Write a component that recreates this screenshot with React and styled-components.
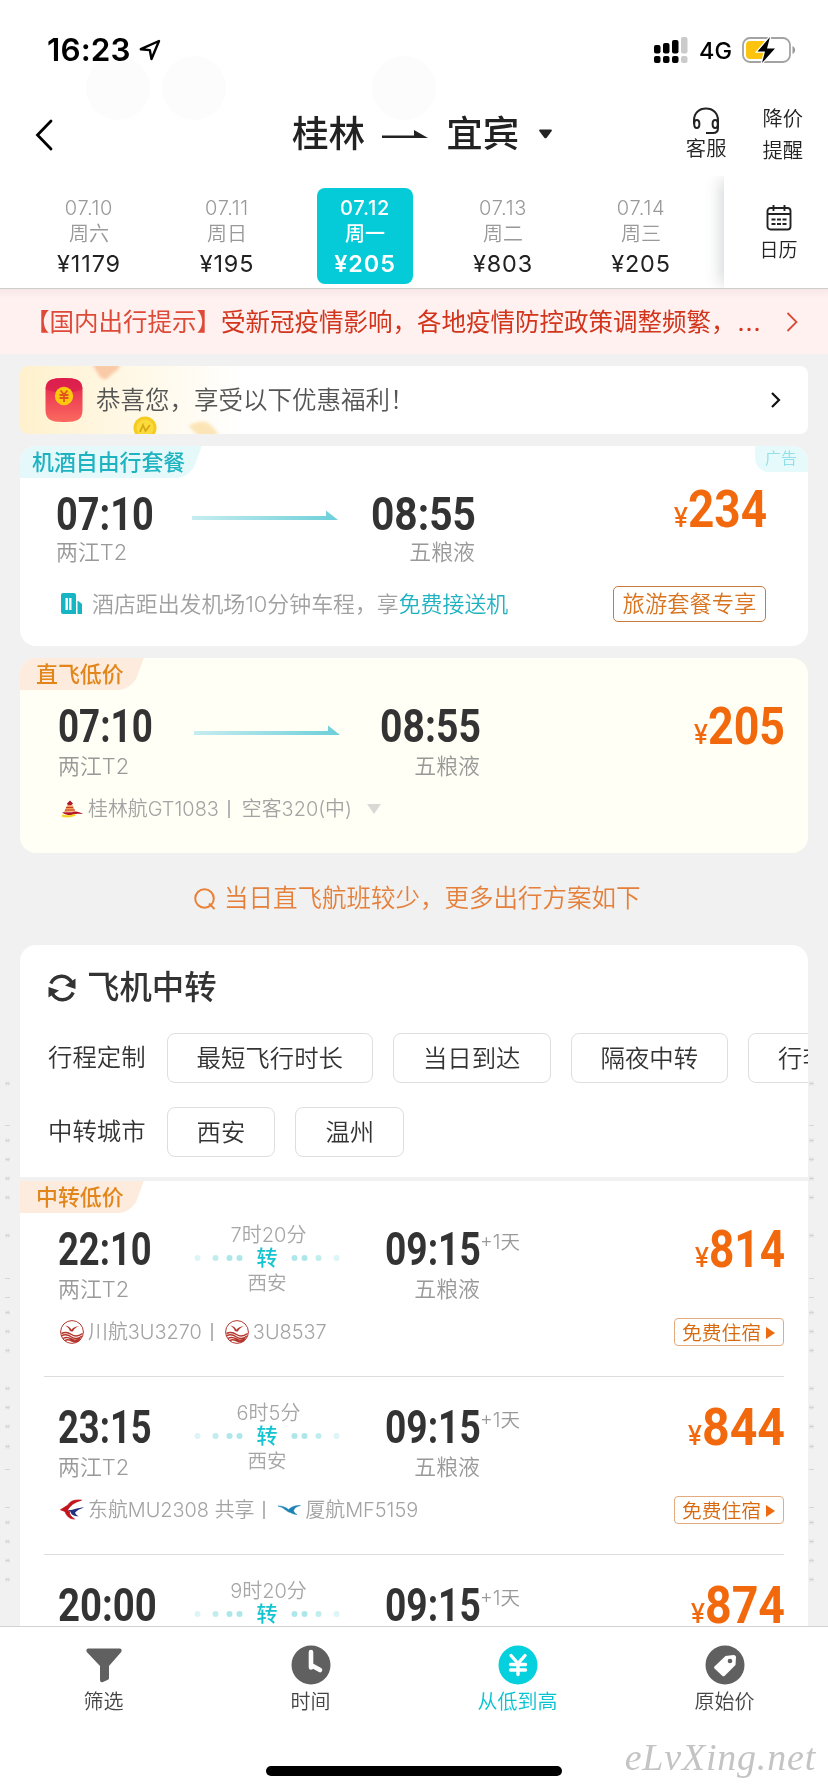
import React from "react";
import styled, { createGlobalStyle } from "styled-components";

const GlobalStyle = createGlobalStyle`
  * {
    box-sizing: border-box;
  }
  body {
    margin: 0;
    background-color: #f1f1f1;
    font-family: Inter, "Noto Sans CJK SC", sans-serif;
    font-weight: 350;
    line-height: 1.2;
    color: #333;
    text-spacing-trim: space-all;
  }
`;
const Page = styled.div`
  position: relative;
  display: flex;
  flex-direction: column;
  width: 828px;
  height: 1792px;
  overflow: hidden;
`;

/* ---------- top ---------- */
const StatusBar = styled.div`
  display: flex;
  align-items: center;
  height: 84px;
  padding: 16px 32px 0 47px;
  background-color: #fff;
  color: #000;
`;
const Clock = styled.span`
  font-size: 31.5px;
  font-weight: 600;
  line-height: 36px;
  letter-spacing: 0.1px;
  margin-right: 8px;
`;
const StatusRight = styled.div`
  display: flex;
  align-items: center;
  margin-left: auto;
`;
const Network = styled.span`
  font-size: 23.5px;
  font-weight: 500;
  line-height: 30px;
  margin: 2px 10px 0 11px;
`;
const Bubbles = styled.svg`
  position: absolute;
  left: 0;
  top: 54px;
  mix-blend-mode: darken;
`;
const NavBar = styled.div`
  display: flex;
  align-items: center;
  height: 92px;
  padding: 11px 25px 2px 35px;
  background-color: #fff;
  color: #222;
`;
const Route = styled.div`
  display: flex;
  align-items: center;
  margin: -2px 0 0 238px;
  font-size: 36.6px;
  font-weight: 500;
  line-height: 48px;
`;
const RouteArrow = styled.svg`
  margin: 0 18px 0 17px;
`;
const NavAction = styled.div`
  display: flex;
  flex-direction: column;
  align-items: center;
  font-size: 20.3px;
  font-weight: 350;
  line-height: ${(props) => props.$line ?? 26}px;
`;
const DateStrip = styled.div`
  display: flex;
  height: 113px;
  padding-left: 20px;
  background-color: #fff;
  border-bottom: 1px solid #cfcccc;
`;
const DateCell = styled.div`
  display: flex;
  flex-direction: column;
  align-items: center;
  width: 96px;
  height: 96px;
  margin: 12px 21px 0;
  padding-top: 7px;
  border-radius: 8px;
  background-color: ${(props) => (props.$active ? "#05cbd9" : "transparent")};
  color: ${(props) => (props.$active ? "#fff" : "#999")};
  font-weight: ${(props) => (props.$active ? 500 : 350)};
  font-size: 20px;
  line-height: 26px;
`;
const DayText = styled.span`
  letter-spacing: 0.7px;
`;
const DatePrice = styled.span`
  font-size: 23.4px;
  font-weight: ${(props) => (props.$active ? 600 : 400)};
  line-height: 34px;
  letter-spacing: 0.9px;
  color: ${(props) => (props.$active ? "#fff" : "#222")};
`;
const CalendarButton = styled.div`
  display: flex;
  flex-direction: column;
  align-items: center;
  gap: 7px;
  width: 104px;
  margin-left: auto;
  padding: 29px 0 0 5px;
  background-color: #fff;
  box-shadow: -8px 0 14px -4px rgba(60, 70, 80, 0.2);
  clip-path: inset(0 0 0 -24px);
  font-size: 19px;
  line-height: 26px;
  color: #222;
`;

/* ---------- notice and coupon ---------- */
const Notice = styled.div`
  display: flex;
  align-items: center;
  height: 65px;
  padding: 0 30px 0 25px;
  background: linear-gradient(#f8e7e7, #fff1f0 9px);
  color: #d2341c;
  font-size: 24.5px;
  font-weight: 400;
  line-height: 34px;
  white-space: nowrap;
`;
const NoticeTitle = styled.span`
  color: #dd4a38;
`;
const Ellipsis = styled.span`
  letter-spacing: 1px;
  margin-left: 2px;
`;
const Chevron = styled.svg`
  margin-left: auto;
`;
const Coupon = styled.div`
  position: relative;
  display: flex;
  align-items: center;
  flex: none;
  height: 68px;
  margin: 12px 20px 0;
  padding: 0 27px 0 25px;
  overflow: hidden;
  border-radius: 8px;
  background: linear-gradient(90deg, #fff1cd, #fff8e6 110px, #fff 225px);
  color: #555;
  font-size: 24.5px;
`;
const Confetti = styled.svg`
  position: absolute;
  left: 60px;
  top: 0;
  .soft {
    filter: blur(1.5px);
  }
`;
const CouponText = styled.span`
  position: relative;
  margin-left: 13px;
  line-height: 34px;
`;

/* ---------- flight cards ---------- */
const Card = styled.div`
  position: relative;
  flex: none;
  height: ${(props) => props.$height}px;
  margin: 12px 20px 0;
  overflow: hidden;
  border-radius: 16px;
  background-color: ${(props) => props.$bg ?? "#fff"};
`;
const Tag = styled.div`
  position: relative;
  z-index: 0;
  display: flex;
  align-items: center;
  width: ${(props) => props.$width}px;
  height: 32px;
  padding-left: ${(props) => props.$pad ?? 16}px;
  font-size: 21.9px;
  font-weight: 500;
  white-space: nowrap;
  color: ${(props) => props.$color};
  &::before {
    content: "";
    position: absolute;
    z-index: -1;
    inset: 0 6px 0 -20px;
    background-color: ${(props) => props.$bg};
    border-radius: 0 0 14px 0;
    transform: skewX(-20deg);
  }
`;
const AdMark = styled.div`
  position: absolute;
  right: 0;
  top: 0;
  width: 53px;
  height: 26px;
  padding-left: 10px;
  border-radius: 0 0 0 14px;
  background-color: #e6fafc;
  color: #93e0e8;
  font-size: 16px;
  line-height: 25px;
`;
const FlightMain = styled.div`
  display: flex;
  height: ${(props) => (props.$promo ? 99 : 96)}px;
  margin-top: 9px;
  padding: ${(props) => (props.$promo ? "0 41px 0 36px" : "0 23px 0 38px")};
`;
const Depart = styled.div`
  width: 136px;
  padding-top: ${(props) => (props.$promo ? 7 : 8)}px;
`;
const Middle = styled.div`
  display: flex;
  flex-direction: column;
  align-items: center;
  width: 146px;
  font-size: 20px;
  line-height: 24px;
  color: #a6a6a6;
`;
const Duration = styled.span`
  height: 25px;
  padding: 1px 0 0 3px;
`;
const Stopover = styled.span`
  padding-top: 2px;
  font-size: 19.6px;
`;
const Arrive = styled.div`
  display: flex;
  flex-direction: column;
  align-items: flex-end;
  width: ${(props) => (props.$promo ? 137 : 140)}px;
  padding-top: ${(props) => (props.$promo ? 7 : 8)}px;
`;
const TimeRow = styled.div`
  position: relative;
  display: flex;
  height: 40px;
  padding-right: ${(props) => (props.$inset ? 1 : 0)}px;
`;
const PlusDay = styled.span`
  position: absolute;
  left: 100%;
  top: 0;
  font-size: 19.5px;
  line-height: 24px;
  white-space: nowrap;
  color: #999;
`;
/* digits squeezed to the given width */
const Digits = styled.span`
  display: block;
  width: ${(props) => props.$width}px;
  font-family: Roboto, sans-serif;
  font-weight: 700;
  font-size: ${(props) => props.$size}px;
  line-height: 40px;
  white-space: nowrap;
  transform: scaleX(${(props) => props.$width / (props.$size * props.$em)});
  transform-origin: left center;
`;
const Airport = styled.div`
  margin-top: ${(props) => (props.$promo ? 4 : 5)}px;
  font-size: 21.9px;
  line-height: 28px;
  color: #999;
`;
const Arrow = styled.svg`
  margin-top: ${(props) => (props.$promo ? 23 : 26)}px;
`;
const Via = styled.div`
  display: flex;
  align-items: center;
  justify-content: space-between;
  width: 146px;
  height: 22px;
`;
const ViaMark = styled.span`
  color: #14c4d0;
  font-size: 21px;
  font-weight: 500;
`;
const Price = styled.div`
  display: flex;
  align-items: baseline;
  height: 40px;
  margin-left: auto;
  margin-top: ${(props) => (props.$promo ? 3 : 8)}px;
  color: #f2690d;
`;
const Yen = styled.span`
  font-size: 27px;
  font-weight: 500;
  line-height: 40px;
  transform: scaleX(0.95);
  transform-origin: right;
`;
const AirlineRow = styled.div`
  display: flex;
  align-items: center;
  height: 28px;
  padding: 0 24px 0 40px;
  font-size: 19.9px;
  line-height: 28px;
  white-space: pre;
  color: #a3a3a3;
`;
const LogoBox = styled.span`
  display: flex;
  align-items: center;
  justify-content: center;
  width: 24px;
  height: 24px;
  margin-right: 4px;
`;
const Bar = styled.span`
  width: 2px;
  height: 18px;
  margin: 0 12px 0 9px;
  background-color: #b5b5b5;
`;
const PromoRow = styled.div`
  display: flex;
  align-items: center;
  height: 36px;
  padding: 0 42px 0 41px;
  font-size: 21.9px;
  color: #a0a0a0;
  em {
    font-style: normal;
    color: #1fb2c1;
  }
`;
const PromoText = styled.span`
  margin-left: 9px;
`;
const PromoBadge = styled.span`
  margin-left: auto;
  width: 153px;
  height: 36px;
  border: 1.5px solid #c87a3c;
  border-radius: 5px;
  text-align: center;
  font-size: 22.3px;
  line-height: 33px;
  color: #d8741f;
`;
const StayBadge = styled.span`
  display: flex;
  align-items: center;
  justify-content: space-between;
  width: 110px;
  height: 28px;
  margin-left: auto;
  padding: 1px 8px 0 7px;
  border: 1px solid #e2ab80;
  border-radius: 4px;
  font-size: 19.8px;
  color: #d8690f;
`;
const Hint = styled.div`
  display: flex;
  align-items: center;
  gap: 8px;
  height: 92px;
  padding-left: 194px;
  font-size: 24.5px;
  color: #e5803a;
`;

/* ---------- transfer section ---------- */
const Transfer = styled.div`
  flex: 1;
  min-height: 0;
  margin: 0 20px;
  overflow: hidden;
  border-radius: 16px 16px 0 0;
  background-color: #fff;
`;
const TransferTitle = styled.div`
  display: flex;
  align-items: center;
  gap: 11px;
  height: 88px;
  padding: 0 0 2px 28px;
  font-size: 32.4px;
  font-weight: 500;
`;
const FilterRow = styled.div`
  display: flex;
  align-items: center;
  gap: 20px;
  height: 50px;
  margin-bottom: ${(props) => (props.$last ? 20 : 24)}px;
  padding-left: 28px;
  font-size: 24.4px;
  white-space: nowrap;
`;
const FilterLabel = styled.span`
  padding-right: 1px;
`;
const Chip = styled.span`
  flex: none;
  height: 50px;
  padding: 0 29px;
  border: 1px solid #dedede;
  border-radius: 8px;
  line-height: 49px;
`;
const Band = styled.div`
  height: 4px;
  background-color: #f1f1f1;
`;
const Item = styled.div`
  padding: ${(props) => (props.$first ? 0 : 14)}px 0 30px;
`;
const Line = styled.div`
  height: 1px;
  margin: 0 24px;
  background-color: #dcdcdc;
`;

/* ---------- bottom ---------- */
const BottomBar = styled.div`
  flex: none;
  display: flex;
  height: 166px;
  border-top: 1px solid #d2d2d2;
  background-color: #fff;
`;
const Tab = styled.div`
  display: flex;
  flex-direction: column;
  align-items: center;
  gap: 3px;
  width: 207px;
  padding-top: 18px;
  font-size: 20px;
  line-height: 28px;
  color: ${(props) => (props.$active ? "#05c3d1" : "#444")};
`;
const HomeIndicator = styled.div`
  position: absolute;
  left: 266px;
  bottom: 16px;
  width: 296px;
  height: 10px;
  border-radius: 5px;
  background-color: #000;
`;
const Watermark = styled.div`
  position: absolute;
  right: 12px;
  bottom: 12px;
  font-family: "Liberation Serif", serif;
  font-style: italic;
  font-size: 38px;
  line-height: 46px;
  letter-spacing: 0.8px;
  color: #c4c4c4;
`;
const SideMarks = styled.svg`
  position: absolute;
  left: ${(props) => props.$left}px;
  top: 1070px;
`;

const dates = [
  { day: "07.10", week: "周六", price: "¥1179" },
  { day: "07.11", week: "周日", price: "¥195" },
  { day: "07.12", week: "周一", price: "¥205", active: true },
  { day: "07.13", week: "周二", price: "¥803" },
  { day: "07.14", week: "周三", price: "¥205" }
];
const transfers = [
  {
    tag: "中转低价", depart: "22:10", departWidth: 92, duration: "7时20分", price: "814", priceWidth: 76,
    legs: [{ logo: "sichuan", text: "川航3U3270" }, { logo: "sichuan", text: "3U8537" }]
  },
  {
    depart: "23:15", departWidth: 92, duration: "6时5分", price: "844", priceWidth: 83,
    legs: [{ logo: "eastern", text: "东航MU2308 共享" }, { logo: "xiamen", text: "厦航MF5159" }]
  },
  { depart: "20:00", departWidth: 97, duration: "9时20分", price: "874", priceWidth: 80, legs: [] }
];
const starMarks = [1083, 1140, 1159, 1178, 1197, 1235, 1312, 1331, 1350, 1388, 1407, 1426, 1446, 1522, 1541, 1560, 1579];
const dashMarks = [1125, 1278, 1297, 1469, 1507];

/* natural width of the digit strings, in em */
const TIME_EM = 2.53;
const PRICE_EM = 1.72;

const SichuanLogo = () => (
  <svg width="24" height="24" viewBox="0 0 24 24" fill="none" stroke="#b5352c">
    <circle cx="12" cy="12" r="11.4" strokeWidth="1" />
    <path d="M5 5.5c3 .3 5 1.6 6.5 4.2C13 7.500 15.500 6.500 19 6.200c-3 1-4.800 2.400-6 5-1.200.7-2.600.3-3.200-.5C9 8.500 7.500 6.600 5 5.500z" fill="#b5352c" stroke="none" />
    <path d="M1.500 13.500c4-2 7-1 10 1s7 2 11-1M1.500 16c4-2.500 7-1 10 1s7 2 10.500-1M3 18.500c3-2 6-1 8.500.5s6 2 9-.5M5 20.500c3-1.500 5-.5 7 .5s4 1 7-.5" strokeWidth="1.500" />
  </svg>
);
const EasternLogo = () => (
  <svg width="24" height="22" viewBox="0 0 24 22">
    <path d="M21.500 1.200C14.500 .5 10 2 8 6L.5 10.800l4.500 1.700c1.500 4.500 4.500 7.500 9.500 7.500-3.500-2.200-5.300-4.500-5-7.500l-2-1.200C10 6.500 14 3.500 21.500 1.200z" fill="#c3141c" stroke="#c3141c" strokeWidth="0.800" />
    <path d="M8 11c5 .5 9-2.500 16-2.500-4.500 1.500-7 3-9 5.200 1 2 2 2.800 4 3.600-4 .2-7.500-1-8.500-4.600z" fill="#25307f" />
  </svg>
);
const XiamenLogo = () => (
  <svg width="23" height="12" viewBox="0 0 23 12">
    <path d="M0 2c4.500 0 8 1.200 10.500 3.600C14 2.500 17 1.200 22.500 1.500c-3.500.8-6 2.300-7 5 .5 1.800 1.500 3 3.500 4-3-.2-5-.8-6.500-2C8.500 8 6.500 3.500 0 2z" fill="#1b82b4" stroke="#1b82b4" strokeWidth="0.500" />
  </svg>
);
const GuilinLogo = () => (
  <svg width="22" height="18" viewBox="0 0 22 18">
    <path d="M6 3.500L9 .5l3 3-2 2H7z" fill="#b3162a" />
    <path d="M3 12l3-6.500h6l2 6z" fill="#f0a05a" />
    <path d="M5 7.500h7M4 10h10" stroke="#c8402a" strokeWidth="1" />
    <path d="M1 12.500c4-1 8 .5 12-.8 3-.8 6 .8 9 2.300-4 .2-6-.8-9 .6-4 1.600-8 .4-12-2.100z" fill="#b3162a" />
    <path d="M1 15.500c5 1.800 9 .8 13-.8" stroke="#f4d21f" strokeWidth="2.200" fill="none" />
  </svg>
);
const logos = { sichuan: SichuanLogo, eastern: EasternLogo, xiamen: XiamenLogo, guilin: GuilinLogo };

const Logo = ({ name }) => {
  const Icon = logos[name];
  return <LogoBox><Icon /></LogoBox>;
};

const FlightArrow = ({ promo }) => (
  <Arrow $promo={promo} width="146" height="10" viewBox="0 0 146 10">
    <defs>
      <linearGradient id="flightArrow" x1="0" x2="1">
        <stop offset="0" stopColor="#c6edf0" />
        <stop offset="1" stopColor="#6ccfd9" />
      </linearGradient>
    </defs>
    <path d="M0 6h134V.5L146 10H0z" fill="url(#flightArrow)" />
  </Arrow>
);
const Dots = ({ flip }) => (
  <svg width="50" height="8" viewBox="0 0 50 8" transform={flip ? "scale(-1 1)" : undefined} fill="#9fe3e6">
    <circle cx="3.500" cy="4" r="3" opacity="0.350" />
    <circle cx="21.500" cy="4" r="3" opacity="0.650" />
    <circle cx="35.500" cy="4" r="3" opacity="0.850" />
    <circle cx="45.500" cy="4" r="3" opacity="0.850" />
  </svg>
);

const Flight = ({ promo, depart, departWidth, arrive, arriveWidth, plusDay, duration, price, priceWidth }) => (
  <FlightMain $promo={promo}>
    <Depart $promo={promo}>
      <TimeRow>
        <Digits $size={promo ? 47 : 45.5} $width={departWidth} $em={TIME_EM}>{depart}</Digits>
      </TimeRow>
      <Airport $promo={promo}>两江T2</Airport>
    </Depart>
    <Middle>
      {duration ? (
        <>
          <Duration>{duration}</Duration>
          <Via><Dots /><ViaMark>转</ViaMark><Dots flip /></Via>
          <Stopover>西安</Stopover>
        </>
      ) : (
        <FlightArrow promo={promo} />
      )}
    </Middle>
    <Arrive $promo={promo}>
      <TimeRow $inset>
        <Digits $size={promo ? 47 : 45.5} $width={arriveWidth} $em={TIME_EM}>{arrive}</Digits>
        {plusDay && <PlusDay>+1天</PlusDay>}
      </TimeRow>
      <Airport $promo={promo}>五粮液</Airport>
    </Arrive>
    <Price $promo={promo}>
      <Yen>¥</Yen>
      <Digits $size={51} $width={priceWidth} $em={PRICE_EM}>{price}</Digits>
    </Price>
  </FlightMain>
);

const Side = ({ left }) => (
  <SideMarks $left={left} width="12" height="530" stroke="#d6d6d6" strokeWidth="1">
    {starMarks.map((y) => (
      <path key={y} d={`M3 ${y - 1069.5}h5M4 ${y - 1071.5}l3 4M7 ${y - 1071.5}l-3 4`} />
    ))}
    {dashMarks.map((y) => (
      <path key={y} d={`M3 ${y - 1069.5}h5`} />
    ))}
  </SideMarks>
);

export default function App() {
  return (
    <Page>
      <GlobalStyle />
      <StatusBar>
        <Clock>16:23</Clock>
        <svg width="22" height="22" viewBox="0 0 22 22" fill="none" stroke="#000" strokeWidth="2.400" strokeLinejoin="round">
          <path d="M20 2L1.800 10.200l9 .9L12.500 20z" />
        </svg>
        <StatusRight>
          <svg width="34" height="27" viewBox="0 0 34 27">
            <rect x="0" y="8" width="6.500" height="8.500" rx="2" />
            <rect x="9" y="6" width="6.500" height="10.500" rx="2" />
            <rect x="18" y="3" width="6.500" height="13.500" rx="2" />
            <rect x="27" y="0" width="6.500" height="16.500" rx="2" fill="#cbcbcb" />
            <rect x="0" y="19" width="6.500" height="7" rx="2" />
            <rect x="9" y="19" width="6.500" height="7" rx="2" />
            <rect x="18" y="19" width="6.500" height="7" rx="2" />
            <rect x="27" y="19" width="6.500" height="7" rx="2" fill="#cbcbcb" />
          </svg>
          <Network>4G</Network>
          <svg width="54" height="28" viewBox="0 0 54 28">
            <rect x="1" y="2" width="47" height="24" rx="7" fill="none" stroke="#a3a3a3" strokeWidth="1.800" />
            <path d="M8 5h15v18H8a4 4 0 0 1-4-4V9a4 4 0 0 1 4-4z" fill="#fcc40f" />
            <path d="M50.500 10c3.500 1.500 3.500 6.500 0 8z" fill="#999" />
            <path d="M28 1L15.500 15.500h7.500L20 27l13-14.500h-8z" fill="#000" stroke="#fff" strokeWidth="2.500" paintOrder="stroke" />
          </svg>
        </StatusRight>
      </StatusBar>
      <Bubbles width="460" height="68" fill="#fcfcfc">
        <circle cx="118" cy="34" r="32" />
        <circle cx="194" cy="34" r="32" />
        <circle cx="404" cy="34" r="32" />
      </Bubbles>
      <NavBar>
        <svg width="19" height="34" viewBox="0 0 19 34" fill="none" stroke="#000" strokeWidth="2.800" strokeLinecap="round">
          <path d="M16 3L2.500 17 16 31" />
        </svg>
        <Route>
          桂林
          <RouteArrow width="46" height="10" viewBox="0 0 46 10">
            <path d="M0 6.500h32V1L46 9H0z" fill="#222" />
          </RouteArrow>
          宜宾
          <svg width="15" height="10" viewBox="0 0 15 10" style={{ marginLeft: 19 }}>
            <path d="M2 .5h11q1.500.3.700 1.600l-5 6.600q-1.200 1.100-2.400 0l-5-6.600Q.5.800 2 .5z" fill="#222" />
          </svg>
        </Route>
        <NavAction style={{ marginLeft: "auto", marginRight: 36 }}>
          <svg width="28" height="29" viewBox="0 0 28 29" fill="none" stroke="#222" strokeWidth="2">
            <path d="M2 17v-3.500C2 6 7 1.500 14 1.500S26 6 26 13.500V21c0 3-2 5-5 5h-7" />
            <ellipse cx="4.800" cy="17" rx="2.600" ry="4" />
            <ellipse cx="23.200" cy="17" rx="2.600" ry="4" />
          </svg>
          客服
        </NavAction>
        <NavAction $line={32}>
          <span>降价</span>
          <span>提醒</span>
        </NavAction>
      </NavBar>
      <DateStrip>
        {dates.map((d) => (
          <DateCell key={d.day} $active={d.active}>
            <DayText>{d.day}</DayText>
            <span>{d.week}</span>
            <DatePrice $active={d.active}>{d.price}</DatePrice>
          </DateCell>
        ))}
        <CalendarButton>
          <svg width="26" height="26" viewBox="0 0 26 26" fill="none" stroke="#222" strokeWidth="1.900">
            <rect x="1.500" y="3" width="23" height="21.500" rx="3" />
            <path d="M1.500 9h23M7.500 0v6M18.500 0v6" />
            <path d="M5.500 14.500h4M11 14.500h4M16.500 14.500h4M5.500 19h4M11 19h4M16.500 19h4" />
          </svg>
          日历
        </CalendarButton>
      </DateStrip>

      <Notice>
        <NoticeTitle>【国内出行提示】</NoticeTitle>
        受新冠疫情影响，各地疫情防控政策调整频繁，
        <Ellipsis>...</Ellipsis>
        <Chevron width="12" height="22" viewBox="0 0 12 22" fill="none" stroke="#dc4a36" strokeWidth="1.800">
          <path d="M1.500 2l9 9-9 9" />
        </Chevron>
      </Notice>

      <Coupon>
        <Confetti width="160" height="68">
          <path className="soft" d="M12 -2h28c0 6-6 8-9 11s-4 5-8 4S17 5 12 -2z" fill="#f9c6a2" opacity="0.900" />
          <circle cx="65" cy="62" r="11.500" fill="#f5cb22" />
          <circle cx="65" cy="62" r="8.500" fill="#fbdc3c" />
          <path d="M60 66l3-7 2.500 6 4.500-6" stroke="#d9a713" strokeWidth="1.800" fill="none" />
          <path className="soft" d="M109 60c8-6 20-5 22 0 4 3 6 5 7 10h-20c-2-4-7-6-9-10z" fill="#fbe0ab" opacity="0.850" />
        </Confetti>
        <svg width="38" height="44" viewBox="0 0 38 44">
          <defs>
            <linearGradient id="packet" x1="0" x2="0" y1="0" y2="1">
              <stop offset="0" stopColor="#e4214b" />
              <stop offset="1" stopColor="#fb6a60" />
            </linearGradient>
          </defs>
          <path d="M19 0C34 0 37.500 3 37.500 13v18c0 10-4 13-18.500 13S.5 41 .5 31V13C.5 3 4 0 19 0z" fill="url(#packet)" />
          <path d="M19 0C33 0 36.500 3 37.500 11 26 16 12 16 .5 11 1.500 3 5 0 19 0z" fill="#d81c4d" opacity="0.700" />
          <circle cx="19" cy="18" r="9.200" fill="#fdc70d" />
          <path d="M15.500 12.500l3.500 4 3.500-4M14.500 17h9M14.500 20h9M19 16.500v7.500" stroke="#e2551e" strokeWidth="1.800" fill="none" />
        </svg>
        <CouponText>恭喜您，享受以下优惠福利！</CouponText>
        <Chevron width="10" height="18" viewBox="0 0 10 18" fill="none" stroke="#111" strokeWidth="2.200">
          <path d="M1 2l7 7-7 7" />
        </Chevron>
      </Coupon>

      <Card $height={200}>
        <Tag $width={182} $pad={12} $bg="#e5f9fb" $color="#1fb2c1">机酒自由行套餐</Tag>
        <AdMark>广告</AdMark>
        <Flight promo depart="07:10" departWidth={96} arrive="08:55" arriveWidth={103} price="234" priceWidth={79} />
        <PromoRow>
          <svg width="22" height="22" viewBox="0 0 22 22">
            <path d="M2 0h11q2 0 2 2v19H2q-2 0-2-2V2q0-2 2-2zM4.500 5v12h6V5z" fill="#17b4c4" fillRule="evenodd" />
            <path d="M7.500 5v12" stroke="#17b4c4" strokeWidth="1.200" />
            <path d="M16.500 7.500l3.500 2.500q1 .7 1 2V21h-4.500z" fill="#17b4c4" />
          </svg>
          <PromoText>酒店距出发机场10分钟车程，享<em>免费接送机</em></PromoText>
          <PromoBadge>旅游套餐专享</PromoBadge>
        </PromoRow>
      </Card>

      <Card $height={195} $bg="#fffff5">
        <Tag $width={124} $bg="#fdebdd" $color="#e2861c">直飞低价</Tag>
        <Flight depart="07:10" departWidth={93} arrive="08:55" arriveWidth={99} price="205" priceWidth={77} />
        <AirlineRow>
          <Logo name="guilin" />
          桂林航GT1083
          <Bar />
          空客320(中)
          <svg width="14" height="10" viewBox="0 0 14 10" style={{ marginLeft: 15 }}>
            <path d="M0 0h14L7 10z" fill="#d9d9d6" />
          </svg>
        </AirlineRow>
      </Card>

      <Hint>
        <svg width="22" height="22" viewBox="0 0 22 22" fill="none" stroke="#e8813a" strokeWidth="2">
          <circle cx="10.500" cy="10.500" r="9.300" />
          <path d="M15 15.500l5.500 5.500" />
        </svg>
        当日直飞航班较少，更多出行方案如下
      </Hint>

      <Transfer>
        <TransferTitle>
          <svg width="28" height="28" viewBox="0 0 28 28" fill="none" stroke="#333" strokeWidth="3.400">
            <path d="M2.800 9.500C7 .5 19 -.5 24 9" />
            <path d="M25.200 18.500C21 27.500 9 28.500 4 19" />
            <path d="M27.500 4.500v10.500L17 11.500z" fill="#333" stroke="none" />
            <path d="M.5 23.500V13L11 16.500z" fill="#333" stroke="none" />
          </svg>
          飞机中转
        </TransferTitle>
        <FilterRow>
          <FilterLabel>行程定制</FilterLabel>
          <Chip>最短飞行时长</Chip>
          <Chip>当日到达</Chip>
          <Chip>隔夜中转</Chip>
          <Chip>行李直达</Chip>
        </FilterRow>
        <FilterRow $last>
          <FilterLabel>中转城市</FilterLabel>
          <Chip>西安</Chip>
          <Chip>温州</Chip>
        </FilterRow>
        <Band />
        {transfers.map((t) => (
          <React.Fragment key={t.depart}>
            <Item $first={Boolean(t.tag)}>
              {t.tag && <Tag $width={124} $bg="#fdebdd" $color="#e2861c">{t.tag}</Tag>}
              <Flight {...t} arrive="09:15" arriveWidth={94} plusDay />
              {t.legs.length > 0 && (
                <AirlineRow>
                  {t.legs.map((leg, i) => (
                    <React.Fragment key={leg.text}>
                      {i > 0 && <Bar />}
                      <Logo name={leg.logo} />
                      {leg.text}
                    </React.Fragment>
                  ))}
                  <StayBadge>
                    免费住宿
                    <svg width="9" height="12" viewBox="0 0 9 12"><path d="M0 0l9 6-9 6z" fill="#ee6a10" /></svg>
                  </StayBadge>
                </AirlineRow>
              )}
            </Item>
            <Line />
          </React.Fragment>
        ))}
      </Transfer>

      <BottomBar>
        <Tab>
          <svg width="40" height="40" viewBox="0 0 40 40">
            <path d="M4 3.500h32q2.500.8 1.200 3.500L25 21v12q0 1-1 1.700l-5 2.300q-3 .8-3-2V21L2.800 7Q1.500 4.300 4 3.500z" fill="#606060" />
          </svg>
          筛选
        </Tab>
        <Tab>
          <svg width="40" height="40" viewBox="0 0 40 40">
            <circle cx="20" cy="20" r="19.500" fill="#606060" />
            <path d="M20 7v13l9 5M20 20v2.500" stroke="#fff" strokeWidth="4.600" strokeLinecap="round" strokeLinejoin="round" fill="none" />
          </svg>
          时间
        </Tab>
        <Tab $active>
          <svg width="40" height="40" viewBox="0 0 40 40">
            <circle cx="20" cy="20" r="19.500" fill="#05d0dd" />
            <path d="M13 10.500l7 8 7-8M12.500 19.500h15M12.500 25h15M20 19v10.500" stroke="#fff" strokeWidth="3.400" strokeLinecap="round" fill="none" />
          </svg>
          从低到高
        </Tab>
        <Tab>
          <svg width="40" height="40" viewBox="0 0 40 40">
            <circle cx="20" cy="20" r="19.500" fill="#606060" />
            <path d="M20.500 11l8-1q2.500 0 2.500 2.500l-.5 7.500L19.500 31q-1 .7-2 0L9.500 23.500q-.8-1 0-2z" fill="#fff" />
            <circle cx="25" cy="16" r="2.300" fill="#606060" />
          </svg>
          原始价
        </Tab>
      </BottomBar>
      <Side left={2} />
      <Side left={806} />
      <HomeIndicator />
      <Watermark>eLvXing.net</Watermark>
    </Page>
  );
}
